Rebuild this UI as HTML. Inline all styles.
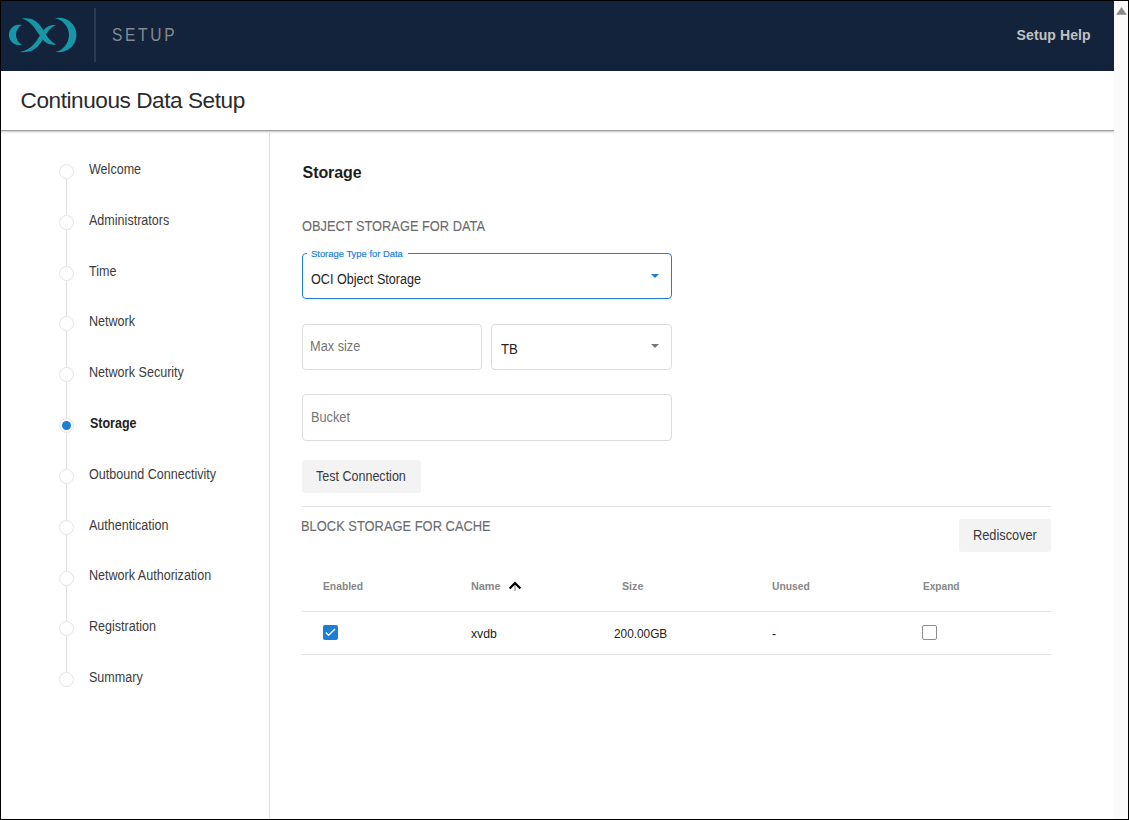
<!DOCTYPE html>
<html><head><meta charset="utf-8">
<style>
html,body{margin:0;padding:0;}
body{width:1129px;height:820px;overflow:hidden;position:relative;background:#fff;font-family:"Liberation Sans",sans-serif;}
.a{position:absolute;white-space:nowrap;}
.t{position:absolute;white-space:nowrap;z-index:5;}
#frame{position:absolute;left:0;top:0;width:1129px;height:820px;box-sizing:border-box;border:1px solid #000;z-index:50;pointer-events:none;}
#hdr{position:absolute;left:1px;top:1px;width:1113px;height:70px;background:#13233b;}
#scroll{position:absolute;left:1114px;top:1px;width:14px;height:818px;background:#fbfbfb;}
#subline{position:absolute;left:1px;top:130px;width:1113px;height:1px;background:#a0a0a0;}
#subshadow{position:absolute;left:1px;top:131px;width:1113px;height:3px;background:linear-gradient(#d6d6d6 0px,#d6d6d6 1px,#ededed 1px,#ededed 2px,#f9f9f9 2px);}
#sidediv{position:absolute;left:269px;top:131px;width:1px;height:688px;background:#e0e0e0;z-index:2;}
.step{position:absolute;left:59px;width:13px;height:13px;border:1px solid #e3e3e3;border-radius:50%;background:#fff;box-sizing:content-box;}
.conn{position:absolute;left:66px;width:1px;background:#e0e0e0;}
.dot{position:absolute;left:61.7px;width:9.6px;height:9.6px;border-radius:50%;background:#1b7fd6;}
.box{position:absolute;box-sizing:border-box;border:1px solid #dcdcdc;border-radius:4px;background:#fff;}
.btn{position:absolute;box-sizing:border-box;background:#f3f3f3;border-radius:3px;}
.hline{position:absolute;left:302px;width:749px;height:1px;background:#e2e2e2;}
</style></head><body>
<div id="frame"></div>
<div id="hdr">
  <svg class="a" style="left:6px;top:15px" width="72" height="40" viewBox="7 16 72 40">
    <path fill="#1597a9" d="M21.9,25.1 A10.2,10.2 0 1,0 21.9,44.7 A11.2,11.2 0 0,1 21.9,25.1 Z"/>
    <path fill="#1597a9" d="M54.8,18.3 A17.2,17.2 0 1,1 55.4,51.7 A17,17 0 0,0 54.8,18.3 Z"/>
    <path fill="#1597a9" d="M22,18.5 C30,17 37,20 42,28 L45,33 C48,38 51,42 56,44.5 C50,45.5 45,43 41.5,38 L38,33 C34,26.5 29,20.5 22,18.5 Z"/>
    <path fill="#1597a9" d="M56,25 C50,24.5 45,27 41.5,33 L38,38.5 C34,45 28,50.5 20,52 C29,53 36,50 40.5,43 L44,37.5 C47,32 51,27 56,25 Z"/>
  </svg>
  <div class="a" style="left:93px;top:7px;width:2px;height:54px;background:#2b3b52;"></div>
</div>
<div id="scroll">
  <svg class="a" style="left:2px;top:5.5px" width="11" height="8" viewBox="0 0 11 8"><path d="M0.6,7.4 L5.5,0.6 L10.4,7.4 Z" fill="#8a8a8a" stroke="#8a8a8a" stroke-width="0.6" stroke-linejoin="round"/></svg>
</div>
<div id="subline"></div>
<div id="subshadow"></div>
<div id="sidediv"></div>
<div class="a" style="left:269px;top:130px;width:1px;height:1px;background:#8c8c8c;z-index:3"></div>
<div class="conn" style="top:178.50px;height:36.83px"></div><div class="step" style="top:164.00px"></div><div class="conn" style="top:229.33px;height:36.83px"></div><div class="step" style="top:214.83px"></div><div class="conn" style="top:280.16px;height:36.83px"></div><div class="step" style="top:265.66px"></div><div class="conn" style="top:330.99px;height:36.83px"></div><div class="step" style="top:316.49px"></div><div class="conn" style="top:381.82px;height:36.83px"></div><div class="step" style="top:367.32px"></div><div class="conn" style="top:432.65px;height:36.83px"></div><div class="step" style="top:418.15px"></div><div class="dot" style="top:420.85px"></div><div class="conn" style="top:483.48px;height:36.83px"></div><div class="step" style="top:468.98px"></div><div class="conn" style="top:534.31px;height:36.83px"></div><div class="step" style="top:519.81px"></div><div class="conn" style="top:585.14px;height:36.83px"></div><div class="step" style="top:570.64px"></div><div class="conn" style="top:635.97px;height:36.83px"></div><div class="step" style="top:621.47px"></div><div class="step" style="top:672.30px"></div>

<div class="box" style="left:302px;top:253px;width:370px;height:46px;border-color:#1b7fd6;"></div>
<div class="a" style="left:307px;top:249px;height:8px;width:101px;background:#fff;"></div>
<svg class="a" style="left:650px;top:273px" width="10" height="7" viewBox="0 0 10 7"><path d="M1,1.1 L9,1.1 L5,5.1 Z" fill="#1b7fd6"/></svg>

<div class="box" style="left:302px;top:324px;width:180px;height:46px;"></div>
<div class="box" style="left:491px;top:324px;width:181px;height:46px;"></div>
<svg class="a" style="left:650px;top:343px" width="10" height="7" viewBox="0 0 10 7"><path d="M1,1.1 L9,1.1 L5,5.1 Z" fill="#777"/></svg>

<div class="box" style="left:302px;top:394px;width:370px;height:47px;"></div>
<div class="btn" style="left:302px;top:460px;width:119px;height:33px;"></div>

<div class="hline" style="top:506px;"></div>
<div class="btn" style="left:959px;top:519px;width:92px;height:33px;"></div>

<svg class="a" style="left:508px;top:580px" width="14" height="12" viewBox="0 0 14 12"><path d="M7,4 L7,11" stroke="#999" stroke-width="1.3"/><path d="M1.6,8.6 L7,3 L12.4,8.6" fill="none" stroke="#000" stroke-width="2.2"/></svg>
<div class="hline" style="top:611px;"></div>
<div class="a" style="left:323px;top:625px;width:15px;height:15px;background:#1b7fd6;border-radius:2px;"></div>
<svg class="a" style="left:323px;top:625px" width="15" height="15" viewBox="0 0 15 15"><path d="M2.8,7.6 L5.6,10.2 L12,3.9" fill="none" stroke="#fff" stroke-width="1.4"/></svg>
<div class="a" style="left:922px;top:625px;width:15px;height:15px;box-sizing:border-box;border:1px solid #8c8c8c;border-radius:2px;"></div>
<div class="hline" style="top:654px;"></div>
<div class="t" id="setup" style="left:112.4px;top:24px;font-size:18.5px;color:#858a93;letter-spacing:3.2px;transform:scaleX(0.84);transform-origin:0 0;">SETUP</div>
<div class="t" id="help" style="left:1016.6px;top:27px;font-size:14px;color:#c2c2c2;font-weight:700;letter-spacing:0.1px;">Setup Help</div>
<div class="t" id="title" style="left:20.6px;top:88px;font-size:22.6px;color:#2b2b2b;letter-spacing:-0.45px;">Continuous Data Setup</div>
<div class="t" id="storage" style="left:302.6px;top:164px;font-size:16px;color:#1e1e1e;font-weight:700;letter-spacing:-0.1px;">Storage</div>
<div class="t" id="obj" style="left:301.6px;top:219px;font-size:13.8px;color:#6c6c6c;transform:scaleX(0.93);transform-origin:0 0;-webkit-text-stroke:0.1px #6c6c6c;">OBJECT STORAGE FOR DATA</div>
<div class="t" id="label" style="left:310.8px;top:248px;font-size:9.5px;color:#1b7fd6;transform:scaleX(0.99);transform-origin:0 0;-webkit-text-stroke:0.2px #1b7fd6;">Storage Type for Data</div>
<div class="t" id="oci" style="left:310.9px;top:272px;font-size:13.8px;color:#262626;transform:scaleX(0.9141);transform-origin:0 0;">OCI Object Storage</div>
<div class="t" id="max" style="left:310.4px;top:339px;font-size:13.8px;color:#767676;transform:scaleX(0.925);transform-origin:0 0;">Max size</div>
<div class="t" id="tb" style="left:500.6px;top:342px;font-size:13.8px;color:#262626;transform:scaleX(0.954);transform-origin:0 0;">TB</div>
<div class="t" id="bucket" style="left:310.5px;top:410px;font-size:13.8px;color:#767676;transform:scaleX(0.925);transform-origin:0 0;">Bucket</div>
<div class="t" id="test" style="left:316.1px;top:469px;font-size:13.8px;color:#3a3a3a;transform:scaleX(0.908);transform-origin:0 0;">Test Connection</div>
<div class="t" id="block" style="left:300.8px;top:519px;font-size:13.8px;color:#6c6c6c;transform:scaleX(0.935);transform-origin:0 0;-webkit-text-stroke:0.1px #6c6c6c;">BLOCK STORAGE FOR CACHE</div>
<div class="t" id="redis" style="left:972.8px;top:528px;font-size:13.8px;color:#3a3a3a;transform:scaleX(0.9254);transform-origin:0 0;">Rediscover</div>
<div class="t" id="th1" style="left:323.4px;top:579px;font-size:11.6px;color:#878787;font-weight:700;transform:scaleX(0.889);transform-origin:0 0;">Enabled</div>
<div class="t" id="th2" style="left:471.1px;top:579px;font-size:11.6px;color:#878787;font-weight:700;transform:scaleX(0.9358);transform-origin:0 0;">Name</div>
<div class="t" id="th3" style="left:621.9px;top:579px;font-size:11.6px;color:#878787;font-weight:700;transform:scaleX(0.9211);transform-origin:0 0;">Size</div>
<div class="t" id="th4" style="left:771.9px;top:579px;font-size:11.6px;color:#878787;font-weight:700;transform:scaleX(0.8908);transform-origin:0 0;">Unused</div>
<div class="t" id="th5" style="left:922.5px;top:579px;font-size:11.6px;color:#878787;font-weight:700;transform:scaleX(0.871);transform-origin:0 0;">Expand</div>
<div class="t" id="td1" style="left:470.5px;top:627px;font-size:12px;color:#222222;transform:scaleX(1.0207);transform-origin:0 0;">xvdb</div>
<div class="t" id="td2" style="left:614.3px;top:627px;font-size:12px;color:#222222;transform:scaleX(0.9848);transform-origin:0 0;">200.00GB</div>
<div class="t" id="td3" style="left:772px;top:627px;font-size:12px;color:#0a0a30;">-</div>
<div class="t" id="s0" style="left:89px;top:162px;font-size:13.8px;color:#3c3c3c;transform:scaleX(0.91);transform-origin:0 0;">Welcome</div>
<div class="t" id="s1" style="left:89px;top:213px;font-size:13.8px;color:#3c3c3c;transform:scaleX(0.91);transform-origin:0 0;">Administrators</div>
<div class="t" id="s2" style="left:89px;top:264px;font-size:13.8px;color:#3c3c3c;transform:scaleX(0.91);transform-origin:0 0;">Time</div>
<div class="t" id="s3" style="left:89px;top:314px;font-size:13.8px;color:#3c3c3c;transform:scaleX(0.91);transform-origin:0 0;">Network</div>
<div class="t" id="s4" style="left:89px;top:365px;font-size:13.8px;color:#3c3c3c;transform:scaleX(0.91);transform-origin:0 0;">Network Security</div>
<div class="t" id="s5" style="left:89.9px;top:416px;font-size:13.8px;color:#222222;font-weight:700;transform:scaleX(0.905);transform-origin:0 0;">Storage</div>
<div class="t" id="s6" style="left:89px;top:467px;font-size:13.8px;color:#3c3c3c;transform:scaleX(0.91);transform-origin:0 0;">Outbound Connectivity</div>
<div class="t" id="s7" style="left:89px;top:518px;font-size:13.8px;color:#3c3c3c;transform:scaleX(0.91);transform-origin:0 0;">Authentication</div>
<div class="t" id="s8" style="left:89px;top:568px;font-size:13.8px;color:#3c3c3c;transform:scaleX(0.91);transform-origin:0 0;">Network Authorization</div>
<div class="t" id="s9" style="left:89px;top:619px;font-size:13.8px;color:#3c3c3c;transform:scaleX(0.91);transform-origin:0 0;">Registration</div>
<div class="t" id="s10" style="left:89px;top:670px;font-size:13.8px;color:#3c3c3c;transform:scaleX(0.91);transform-origin:0 0;">Summary</div>
</body></html>
